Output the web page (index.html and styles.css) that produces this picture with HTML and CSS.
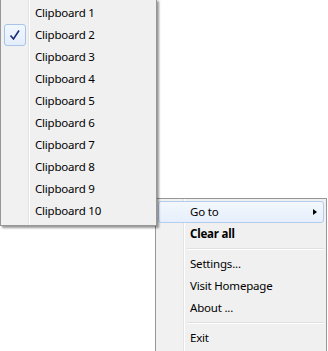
FILE: index.html
```html
<!DOCTYPE html>
<html lang="en">

<head>
    <meta charset="UTF-8">
    <meta name="viewport" content="width=device-width, initial-scale=1.0">
    <title>Clipboard Menu</title>
    <link rel="stylesheet" href="styles.css">
</head>

<body>

    <div class="desktop">

        <!-- main tray menu -->
        <div class="menu tray-menu">
            <div class="item hover">Go to <span class="arrow"></span></div>
            <div class="item bold">Clear all</div>
            <div class="sep"></div>
            <div class="item">Settings...</div>
            <div class="item">Visit Homepage</div>
            <div class="item">About ...</div>
            <div class="sep"></div>
            <div class="item">Exit</div>
        </div>

        <!-- submenu with clipboards -->
        <div class="menu clip-menu">
            <div class="item">Clipboard 1</div>
            <div class="item checked">
                <span class="check">
                    <svg width="12" height="12" viewBox="0 0 12 12">
                        <path d="M1.5 6.5 L4.5 10 L10 1.5" fill="none" stroke="#1b2a78" stroke-width="1.6" />
                    </svg>
                </span>
                Clipboard 2
            </div>
            <div class="item">Clipboard 3</div>
            <div class="item">Clipboard 4</div>
            <div class="item">Clipboard 5</div>
            <div class="item">Clipboard 6</div>
            <div class="item">Clipboard 7</div>
            <div class="item">Clipboard 8</div>
            <div class="item">Clipboard 9</div>
            <div class="item">Clipboard 10</div>
        </div>

    </div>

</body>

</html>
```

FILE: styles.css
```css
body {
    margin: 0;
    background: #fff;
    font-family: "Segoe UI", "Noto Sans", sans-serif;
    font-size: 11.5px;
    letter-spacing: -0.2px;
    color: #000;
}

.desktop {
    position: relative;
    width: 328px;
    height: 351px;
    overflow: hidden;
}

.menu {
    position: absolute;
    box-sizing: border-box;
    padding: 2px;
    border: 1px solid #979797;
    background: linear-gradient(to right, #f1f1f1 28px, #e2e3e3 28px, #e2e3e3 29px, #fff 29px, #fff 30px, #f0f0f0 30px);
    background-origin: border-box;
}

.clip-menu {
    left: 0;
    top: -1px;
    width: 157px;
    height: 227px;
    box-shadow: 2px 2px 2px rgba(0, 0, 0, 0.4);
}

.tray-menu {
    left: 155px;
    top: 198px;
    width: 172px;
    height: 170px;
}

.item {
    position: relative;
    display: flex;
    align-items: center;
    height: 22px;
    padding-left: 31px;
    padding-right: 6px;
    padding-bottom: 1px;
    box-sizing: border-box;
    border: 1px solid transparent;
    border-radius: 3px;
}

.item.bold {
    font-weight: bold;
}

.item.hover {
    background: linear-gradient(#f3f7fd, #e6effb);
    border-color: #b4cdee;
}

.arrow {
    margin-left: auto;
    width: 0;
    height: 0;
    border-left: 4px solid #000;
    border-top: 3.5px solid transparent;
    border-bottom: 3.5px solid transparent;
}

.check {
    position: absolute;
    left: 0;
    top: -1px;
    width: 20px;
    height: 20px;
    display: flex;
    align-items: center;
    justify-content: center;
    border: 1px solid #a8c4ea;
    border-radius: 3px;
    background: linear-gradient(#f2f7fe, #e3edfb);
}

.sep {
    height: 2px;
    margin: 3px 0 3px 29px;
    background: linear-gradient(#e0e0e0 1px, #fff 1px);
}
```
